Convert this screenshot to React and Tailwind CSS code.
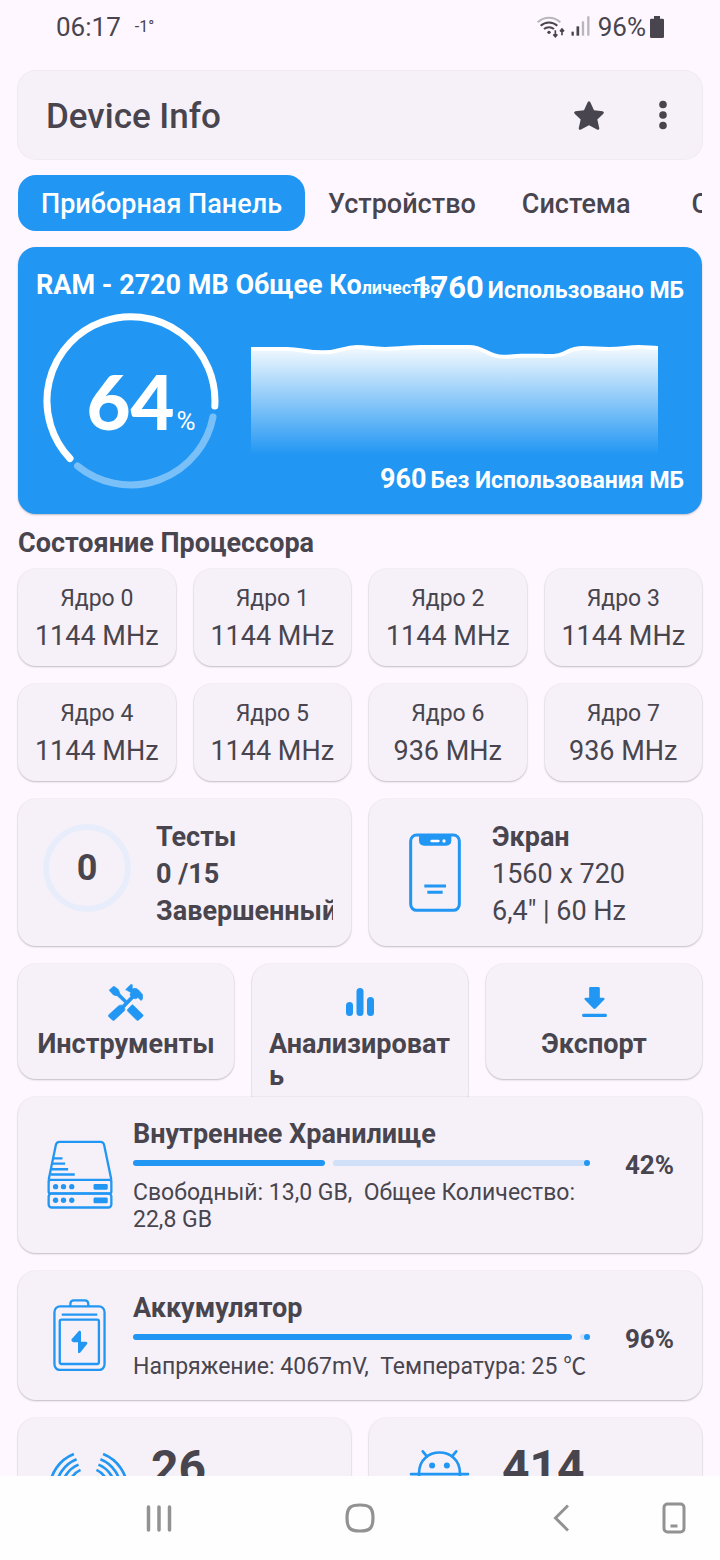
import React from 'react';

const tabs = ['Приборная Панель', 'Устройство', 'Система', 'CPU'];

const cores = [
  { name: 'Ядро 0', freq: '1144 MHz' },
  { name: 'Ядро 1', freq: '1144 MHz' },
  { name: 'Ядро 2', freq: '1144 MHz' },
  { name: 'Ядро 3', freq: '1144 MHz' },
  { name: 'Ядро 4', freq: '1144 MHz' },
  { name: 'Ядро 5', freq: '1144 MHz' },
  { name: 'Ядро 6', freq: '936 MHz' },
  { name: 'Ядро 7', freq: '936 MHz' },
];

const Card = ({ as: Tag = 'div', className = '', children, ...rest }) => (
  <Tag
    className={`rounded-[18px] bg-[#f6f1f8] shadow-[0_0_1px_1px_rgba(0,0,0,0.03),0_1px_2px_rgba(0,0,0,0.22)] ${className}`}
    {...rest}
  >
    {children}
  </Tag>
);

const WifiIcon = () => (
  <svg viewBox="0 0 84 66" className="w-7 h-[22px]" fill="none" strokeWidth="6">
    <path d="M2 19a49 49 0 0 1 68 0" stroke="#b9b5bd" />
    <path d="M11 29a37 37 0 0 1 50 0" stroke="#48454e" />
    <path d="M21 39a23 23 0 0 1 30 0" stroke="#48454e" />
    <circle cx="36" cy="49" r="5" fill="#48454e" />
    <path d="M55 43v18M49 55l6 7 6-7M75 58V40M69 46l6-7 6 7" stroke="#48454e" strokeWidth="5" />
  </svg>
);

const SignalIcon = () => (
  <svg viewBox="0 0 56 60" className="w-[19px] h-5">
    <rect x="1" y="47" width="7" height="12" fill="#48454e" />
    <rect x="16" y="31" width="8" height="28" fill="#48454e" />
    <rect x="32" y="16" width="7" height="43" fill="#b9b5bd" />
    <rect x="48" y="1" width="7" height="58" fill="#b9b5bd" />
  </svg>
);

const BatteryFull = () => (
  <svg viewBox="0 0 42 66" className="w-[14px] h-[22px]" fill="#48454e">
    <path d="M12 0h18v8h8a4 4 0 0 1 4 4v50a4 4 0 0 1-4 4H4a4 4 0 0 1-4-4V12a4 4 0 0 1 4-4h8z" />
  </svg>
);

const StatusBar = () => (
  <div className="h-[70px] shrink-0 flex justify-between px-14 pt-3 leading-[30px]">
    <div className="flex items-start gap-[14px]">
      <span className="text-[26px]">06:17</span>
      <span className="text-[16px]">-1°</span>
    </div>
    <div className="flex items-start">
      <span className="pt-1"><WifiIcon /></span>
      <span className="pt-1 pl-1.5"><SignalIcon /></span>
      <span className="text-[26px] pl-2">96%</span>
      <span className="pt-1 pl-1"><BatteryFull /></span>
    </div>
  </div>
);

const RamCard = () => (
  <section className="mt-4 rounded-[18px] bg-[#2196f3] text-white px-[18px] pt-5 pb-[15px] shadow-[0_1px_2px_rgba(0,0,0,0.25)]">
    <div className="flex font-bold whitespace-nowrap">
      <h2 className="w-0 flex-1 text-[27px] leading-9">
        RAM - 2720 MB Общее Ко<span className="text-[18px]">личество</span>
      </h2>
      <p className="flex items-baseline gap-1 text-[23px] leading-[42px]">
        <span className="text-[31px]">1760</span> Использовано МБ
      </p>
    </div>
    <div className="flex items-start pt-px">
      <div className="relative shrink-0 ml-[7px] size-44 flex items-center justify-center">
        <svg viewBox="0 0 176 176" className="absolute inset-0" fill="none" strokeWidth="7" strokeLinecap="round">
          <path d="M27 145.500A84 84 0 1 1 171.800 93" stroke="#fff" />
          <path d="M170 104A84 84 0 0 1 34.500 153" stroke="#7ac0f8" />
        </svg>
        <p className="relative flex items-baseline gap-0.5 pl-5 whitespace-nowrap leading-none">
          <span className="font-['Lato',sans-serif] font-black text-[76px]">64</span>
          <span className="text-[26px]">%</span>
        </p>
      </div>
      <svg viewBox="0 0 407 114" preserveAspectRatio="none" className="min-w-0 flex-1 h-28 mt-[30px] ml-8 mr-[26px]">
        <defs>
          <linearGradient id="ramFill" x1="0" y1="0" x2="0" y2="1">
            <stop offset="0" stopColor="#fff" stopOpacity="0.95" />
            <stop offset="1" stopColor="#fff" stopOpacity="0" />
          </linearGradient>
        </defs>
        <path
          d="M0 6H36C50 6 54 9.500 72 9.500C90 9.500 92 4 106 4C116 4 120 6 134 6C150 6 158 4 170 4H218C234 4 236 14 252 14C262 14 262 13 270 13H290C320 15 312 5 332 5C345 5 345 6 358 6C372 6 376 4 388 4C396 4 400 5 407 5V114H0Z"
          fill="url(#ramFill)"
        />
        <path
          d="M0 6H36C50 6 54 9.500 72 9.500C90 9.500 92 4 106 4C116 4 120 6 134 6C150 6 158 4 170 4H218C234 4 236 14 252 14C262 14 262 13 270 13H290C320 15 312 5 332 5C345 5 345 6 358 6C372 6 376 4 388 4C396 4 400 5 407 5"
          fill="none"
          stroke="#fff"
          strokeWidth="4"
        />
      </svg>
    </div>
    <p className="-mt-7 flex items-baseline justify-end gap-1 text-[23px] leading-9 font-bold">
      <span className="text-[27px]">960</span> Без Использования МБ
    </p>
  </section>
);

const PhoneIcon = () => (
  <svg viewBox="147 130 156 237" className="w-[52px] h-[79px]" fill="none" stroke="#2196f3" strokeWidth="9">
    <rect x="152" y="136" width="146" height="226" rx="18" />
    <path d="M177 136h97v16q0 16-16 16h-65q-16 0-16-16z" fill="#2196f3" stroke="none" />
    <path d="M193 289h65M202 308h46" />
    <path d="M215 154h20" stroke="#fff" strokeWidth="8" strokeLinecap="round" />
    <circle cx="252" cy="154" r="5" fill="#fff" stroke="none" />
  </svg>
);

const ToolsIcon = () => (
  <svg viewBox="0 0 108 112" className="w-9 h-[37px]" fill="#2196f3" stroke="#2196f3" strokeWidth="2" strokeLinejoin="round">
    <path d="M3 19L15 8Q18 6 21 9L31 17L36 30L56 50L50 57L28 36L16 33Z" />
    <path d="M59 77L71 64Q73 62 76 64L105 93Q107 96 104 99L92 109Q89 112 86 109L60 83Q57 80 59 77Z" />
    <path d="M43 64L73 33L80 40L50 71V80L19 109Q16 112 13 109L2 99Q-1 96 2 93L32 66Q34 64 37 64Z" />
    <path d="M53 17L68 2H73V15L80 13Q87 13 92 18L104 32V45L100 50L90 41L84 45L74 42L66 33L69 26Z" />
  </svg>
);

const BarsIcon = () => (
  <svg viewBox="0 0 28 28" className="size-7" fill="#2196f3">
    <rect x="0" y="14" width="7" height="14" rx="3.500" />
    <rect x="10.500" y="0" width="7" height="28" rx="3.500" />
    <rect x="21" y="9" width="7" height="19" rx="3.500" />
  </svg>
);

const DownloadIcon = () => (
  <svg viewBox="0 0 74 90" className="w-[25px] h-[30px]" fill="#2196f3">
    <path d="M24 0h25q4 0 4 4v28h10q7 1 3 6L41 64q-4 4-8 0L8 38q-4-5 3-6h10V4q0-4 3-4z" />
    <rect x="0" y="80" width="74" height="10" rx="4" />
  </svg>
);

const StorageIcon = () => (
  <svg viewBox="140 151 200 208" className="w-[66px] h-[69px]" fill="none" stroke="#2196f3" strokeWidth="7">
    <path d="M145 271L167 165Q169 156 178 156H302Q311 156 313 165L335 271" />
    <rect x="145" y="271" width="190" height="41" rx="5" />
    <rect x="145" y="313" width="190" height="42" rx="9" />
    <path d="M161 206h26M158 222h37M155 239h49M151 255h73" />
    <g fill="#2196f3" stroke="none">
      <circle cx="166" cy="292" r="8" />
      <circle cx="190" cy="292" r="8" />
      <circle cx="215" cy="292" r="8" />
      <circle cx="166" cy="333" r="8" />
      <circle cx="190" cy="333" r="8" />
      <circle cx="215" cy="333" r="8" />
      <rect x="281" y="284" width="43" height="17" rx="4" />
      <rect x="281" y="325" width="43" height="17" rx="4" />
    </g>
  </svg>
);

const BatteryIcon = () => (
  <svg viewBox="161 629 159 217" className="w-[53px] h-[72px]" fill="none" stroke="#2196f3" strokeWidth="7">
    <rect x="165" y="651" width="151" height="192" rx="17" />
    <path d="M213 651V644Q213 633 224 633H256Q267 633 267 644V651M187 676H294" />
    <rect x="181" y="691" width="118" height="134" rx="5" />
    <path d="M239 725L216 751Q215 758 222 759H236V790Q239 794 243 790L264 764Q266 759 260 758H245V728Q243 723 239 725Z" fill="#2196f3" stroke="none" />
  </svg>
);

const SensorIcon = () => (
  <svg viewBox="150 154 232 232" className="size-[77px]" fill="none" stroke="#2196f3" strokeWidth="8">
    <path d="M222 163A115 115 0 0 0 222 377M230 179A98 98 0 0 0 230 361M236 195A81 81 0 0 0 236 345M242 211A65 65 0 0 0 242 329" />
    <path d="M310 163A115 115 0 0 1 310 377M302 179A98 98 0 0 1 302 361M296 195A81 81 0 0 1 296 345M290 211A65 65 0 0 1 290 329" />
  </svg>
);

const AndroidIcon = () => (
  <svg viewBox="148 148 182 200" className="w-[61px] h-[67px]" fill="none" stroke="#2196f3" strokeWidth="8" strokeLinecap="round">
    <path d="M178 220C178 138 300 138 300 220M189 155L202 171M289 155L276 171" />
    <path d="M154 223H324M178 223V320H300V223" />
    <g fill="#2196f3" stroke="none">
      <circle cx="217" cy="197" r="9" />
      <circle cx="261" cy="197" r="9" />
    </g>
  </svg>
);

const MeterCard = ({ icon, title, percent, children }) => (
  <Card className="relative z-10 mt-[18px] flex items-center pr-7 pt-[18px] pb-4">
    <div className="w-[115px] shrink-0 flex justify-center pl-2 pb-1">{icon}</div>
    <div className="flex-1 min-w-0">
      <h3 className="text-[27px] leading-[38px] font-bold">{title}</h3>
      <div
        role="progressbar"
        aria-label={title}
        aria-valuenow={percent}
        className="flex gap-2 h-1.5 my-[7px]"
      >
        <div className="rounded-full bg-[#2196f3]" style={{ width: `${percent}%` }} />
        <div className="flex-1 flex justify-end rounded-full bg-[#cfe0f8]">
          <span className="size-1.5 rounded-full bg-[#2196f3]" />
        </div>
      </div>
      <p className="text-[23px] leading-[27px] pt-1.5 pb-1 whitespace-pre-wrap">{children}</p>
    </div>
    <span className="w-[84px] shrink-0 self-start pt-8 text-right text-[26px] leading-9 font-bold">{percent}%</span>
  </Card>
);

const NavBar = () => (
  <nav className="h-[84px] shrink-0 relative z-20 bg-[#fefefe] flex items-center pl-[58px] text-[#929292]">
    <button aria-label="Недавние" className="flex-1 flex justify-center">
      <svg viewBox="0 0 26 27" className="w-[26px] h-[27px]" stroke="currentColor" strokeWidth="3.500" strokeLinecap="round">
        <path d="M2.500 2V25M13 2V25M23.500 2V25" />
      </svg>
    </button>
    <button aria-label="Домой" className="flex-1 flex justify-center">
      <svg viewBox="0 0 30 30" className="size-[30px]" fill="none" stroke="currentColor" strokeWidth="3.200">
        <path d="M15 2C25 2 28 5 28 15S25 28 15 28S2 25 2 15S5 2 15 2Z" />
      </svg>
    </button>
    <button aria-label="Назад" className="flex-1 flex justify-center">
      <svg viewBox="0 0 16 28" className="w-4 h-7" fill="none" stroke="currentColor" strokeWidth="3">
        <path d="M15 1.500L2.500 14L15 26.500" />
      </svg>
    </button>
    <button aria-label="Экран" className="w-[58px] flex justify-start">
      <svg viewBox="0 0 24 32" className="w-6 h-8" fill="none" stroke="currentColor" strokeWidth="3">
        <rect x="2" y="2" width="20" height="28" rx="3.500" />
        <path d="M8.500 24H15.500" />
      </svg>
    </button>
  </nav>
);

const App = () => (
  <div className="h-screen flex flex-col overflow-hidden bg-[#fef7ff] text-[#48454e] font-['Roboto','Noto_Sans_CJK_SC',sans-serif]">
    <StatusBar />
    <main className="flex-1 min-h-0 overflow-hidden px-[18px] pt-px">
      <header className="h-[88px] rounded-[18px] bg-[#f6f1f8] shadow-[0_0_1px_1px_rgba(0,0,0,0.06)] flex items-center pl-7 pr-[34px]">
        <h1 className="flex-1 pt-1 text-[35px] font-medium">Device Info</h1>
        <button aria-label="Избранное">
          <svg viewBox="0 0 90 86" className="w-[30px] h-[29px]" fill="currentColor">
            <path d="M41 3Q45-3 49 3L60 27L86 30Q92 33 88 38L70 55L76 82Q75 88 69 85L45 72L21 85Q15 88 14 82L20 55L2 38Q-2 33 4 30L30 27Z" />
          </svg>
        </button>
        <button aria-label="Меню" className="ml-[54px]">
          <svg viewBox="0 0 10 30" className="w-2.5 h-[30px]" fill="currentColor">
            <circle cx="5" cy="4.500" r="3.800" />
            <circle cx="5" cy="15" r="3.800" />
            <circle cx="5" cy="25.500" r="3.800" />
          </svg>
        </button>
      </header>

      <nav className="mt-4 flex overflow-hidden">
        {tabs.map((tab, i) => (
          <button
            key={tab}
            className={`h-14 shrink-0 min-w-32 px-[23px] pt-0.5 rounded-[18px] text-[27px] font-medium whitespace-nowrap ${i === 0 ? 'bg-[#2196f3] text-white' : ''}`}
          >
            {tab}
          </button>
        ))}
      </nav>

      <RamCard />

      <h2 className="mt-3 text-[27px] leading-[34px] font-bold">Состояние Процессора</h2>
      <div className="mt-[9px] grid grid-cols-4 gap-[18px]">
        {cores.map((core) => (
          <Card key={core.name} className="pt-[14px] pb-2 text-center whitespace-nowrap">
            <p className="text-[23px] leading-8">{core.name}</p>
            <p className="text-[27px] leading-[43px]">{core.freq}</p>
          </Card>
        ))}
      </div>

      <div className="mt-[18px] grid grid-cols-2 gap-[18px]">
        <Card className="flex pt-5 pb-4 pr-[18px]">
          <div className="shrink-0 w-[138px] pl-[25px] pt-[5px]">
            <div className="size-[88px] rounded-full border-[6px] border-[#e8edfb] flex items-center justify-center text-[36px] font-bold">0</div>
          </div>
          <div className="min-w-0 overflow-hidden text-[27px] leading-[37px] font-bold whitespace-nowrap">
            <h3>Тесты</h3>
            <p>0 /15</p>
            <p>Завершенный</p>
          </div>
        </Card>
        <Card className="flex pt-5 pb-4 pr-[18px]">
          <div className="shrink-0 w-[123px] flex items-center justify-center pl-2 pb-1"><PhoneIcon /></div>
          <div className="text-[27px] leading-[37px] whitespace-nowrap">
            <h3 className="font-bold">Экран</h3>
            <p>1560 x 720</p>
            <p>6,4" | 60 Hz</p>
          </div>
        </Card>
      </div>

      <div className="mt-[18px] grid grid-cols-3 items-start gap-[18px] text-[27px] leading-8 font-bold">
        <Card as="button" className="px-[17px] pt-5 pb-[19px]">
          <span className="h-11 flex justify-center"><ToolsIcon /></span>
          <span className="block">Инструменты</span>
        </Card>
        <Card as="button" className="px-[17px] pt-5 pb-[19px] -mb-8">
          <span className="h-11 flex justify-center pt-1"><BarsIcon /></span>
          <span className="block break-all text-left">Анализировать</span>
        </Card>
        <Card as="button" className="px-[17px] pt-5 pb-[19px]">
          <span className="h-11 flex justify-center pt-[3px]"><DownloadIcon /></span>
          <span className="block">Экспорт</span>
        </Card>
      </div>

      <MeterCard icon={<StorageIcon />} title="Внутреннее Хранилище" percent={42}>
        {'Свободный: 13,0 GB,  Общее Количество: 22,8 GB'}
      </MeterCard>
      <MeterCard icon={<BatteryIcon />} title="Аккумулятор" percent={96}>
        {'Напряжение: 4067mV,  Температура: 25 ℃'}
      </MeterCard>

      <div className="mt-[18px] grid grid-cols-2 gap-[18px]">
        <Card className="h-[148px] flex items-start pt-[33px] pl-8">
          <SensorIcon />
          <span className="pl-6 -mt-2 text-[48px] leading-[50px] font-bold">26</span>
        </Card>
        <Card className="h-[148px] flex items-start pt-[31px] pl-10">
          <AndroidIcon />
          <span className="pl-8 -mt-1.5 text-[48px] leading-[50px] font-bold">414</span>
        </Card>
      </div>
    </main>
    <NavBar />
  </div>
);

export default App;
